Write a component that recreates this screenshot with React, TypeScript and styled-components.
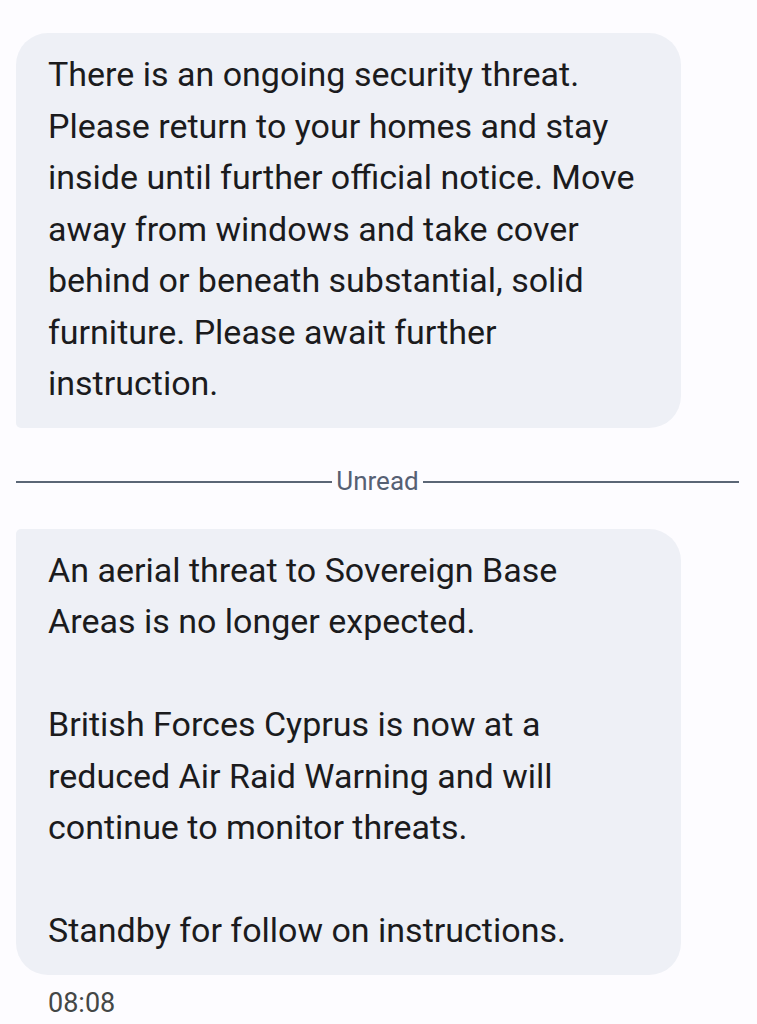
import React from "react";
import styled, { createGlobalStyle } from "styled-components";

const Global = createGlobalStyle`
  html, body { margin: 0; padding: 0; background: #fdfcff; }
  body { font-family: Roboto, "Noto Sans", Arial, sans-serif; }
`;

const Page = styled.div`
  width: 757px;
  height: 1024px;
  overflow: hidden;
  background: #fdfcff;
  padding-top: 33px;
  box-sizing: border-box;
  display: flex;
  flex-direction: column;
`;

const Bubble = styled.div<{ $pos: "first" | "last" }>`
  margin-left: 16px;
  width: 665px;
  box-sizing: border-box;
  background: #eef0f6;
  border-radius: ${(p) =>
    p.$pos === "first" ? "32px 32px 32px 5px" : "5px 32px 32px 32px"};
  padding: 16px 20px 18px 32px;
  color: #1b1b1d;
  font-size: 34px;
  line-height: 51.5px;
  letter-spacing: 0px;
`;

const Line = styled.div`
  white-space: nowrap;
  height: 51.5px;
`;

const Divider = styled.div`
  display: flex;
  align-items: center;
  gap: 4px;
  margin: 37px 18px 30px 16px;
  height: 34px;
`;

const Rule = styled.div`
  flex: 1;
  height: 2px;
  background: #5b6676;
`;

const DividerLabel = styled.span`
  font-size: 26px;
  color: #566073;
  line-height: 1;
  padding-bottom: 2px;
`;

const Time = styled.div`
  margin: 12px 0 0 48px;
  font-size: 27px;
  color: #444746;
`;

const first = [
  "There is an ongoing security threat.",
  "Please return to your homes and stay",
  "inside until further official notice. Move",
  "away from windows and take cover",
  "behind or beneath substantial, solid",
  "furniture. Please await further",
  "instruction.",
];

const second = [
  "An aerial threat to Sovereign Base",
  "Areas is no longer expected.",
  "",
  "British Forces Cyprus is now at a",
  "reduced Air Raid Warning and will",
  "continue to monitor threats.",
  "",
  "Standby for follow on instructions.",
];

export default function App() {
  return (
    <>
      <Global />
      <Page>
        <Bubble $pos="first">
          {first.map((l, i) => (
            <Line key={i}>{l}</Line>
          ))}
        </Bubble>
        <Divider>
          <Rule />
          <DividerLabel>Unread</DividerLabel>
          <Rule />
        </Divider>
        <Bubble $pos="last">
          {second.map((l, i) => (
            <Line key={i}>{l}</Line>
          ))}
        </Bubble>
        <Time>08:08</Time>
      </Page>
    </>
  );
}
